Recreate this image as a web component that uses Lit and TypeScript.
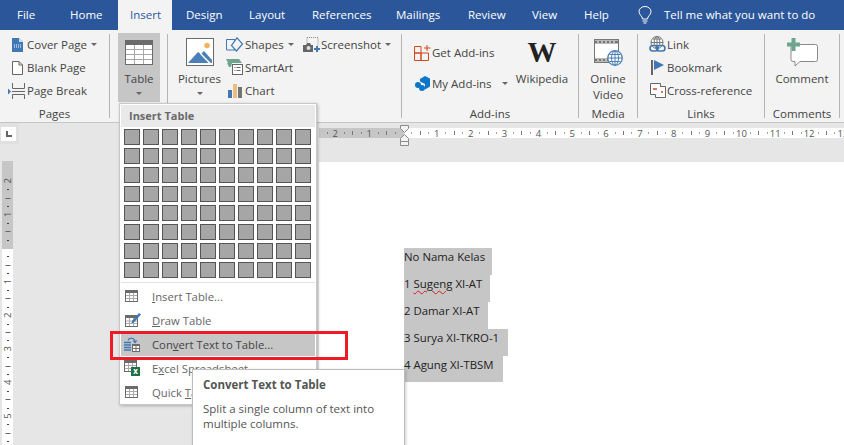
import { LitElement, css, html, svg } from "lit";
import { customElement } from "lit/decorators.js";

const tabs = [
  { label: "File", width: 57, pad: 17 },
  { label: "Home", width: 61, pad: 13 },
  { label: "Insert", width: 54, pad: 12, active: true },
  { label: "Design", width: 63, pad: 14 },
  { label: "Layout", width: 63, pad: 14 },
  { label: "References", width: 84, pad: 14 },
  { label: "Mailings", width: 72, pad: 14 },
  { label: "Review", width: 64, pad: 14 },
  { label: "View", width: 52, pad: 14 },
  { label: "Help", width: 54, pad: 14 },
];

const docLines = [
  { width: 88, text: html`No Nama Kelas` },
  { width: 86, text: html`1 <u>Sugeng</u> XI-AT` },
  { width: 84, text: html`2 Damar XI-AT` },
  { width: 104, text: html`3 Surya XI-TKRO-1` },
  { width: 99, text: html`4 Agung XI-TBSM` },
];

const I = {
  cover: html`<svg width="13" height="16" viewBox="0 0 13 16"><path d="M1 1h7l4 4v10H1z" fill="#3f78b5"/><path d="M8 1v4h4z" fill="#cfe0f0"/><path d="M3 8h7M3 10h7" stroke="#fff" stroke-width="1" stroke-dasharray="1 1"/></svg>`,
  blank: html`<svg width="13" height="16" viewBox="0 0 13 16"><path d="M1.500 1.500h6.500l3.500 3.500v9.500h-10z" fill="#fff" stroke="#666"/><path d="M8 1.500v3.500h3.500" fill="none" stroke="#666"/></svg>`,
  pageBreak: html`<svg width="19" height="16" viewBox="0 0 19 16"><path d="M4.500 0v5.500h12V0M4.500 16v-4.500h12V16" fill="none" stroke="#666"/><path d="M4 8.500h13" stroke="#666"/><path d="M0 5.500l3 3-3 3z" fill="#3f78b5"/></svg>`,
  table: html`<svg width="28" height="25" viewBox="0 0 28 25"><rect width="28" height="25" fill="#6b6b6b"/><rect x="1" y="5" width="26" height="19" fill="#fff"/><path d="M1 9.500h26M1 14.500h26M1 19.500h26M9.500 5v19M18.500 5v19" stroke="#a8a8a8"/></svg>`,
  pictures: html`<svg width="28" height="28" viewBox="0 0 28 28"><rect x=".5" y=".5" width="27" height="27" fill="#fff" stroke="#6b6b6b"/><circle cx="21" cy="7.500" r="2.800" fill="#efb55f"/><path d="M2 25l10-11 4 3 8 8z" fill="#4a7fb8"/><path d="M15 16l3-3 8 9v3h-1z" fill="#4a7fb8"/><path d="M14.500 15.500l9 9.500" stroke="#fff" stroke-width="1.300"/></svg>`,
  shapes: html`<svg width="19" height="16" viewBox="0 0 19 16"><path d="M.5 2.500h8.500v10.500h-8.500z" fill="none" stroke="#3f78b5"/><path d="M11 .8l5.500 6.200-6 7-5-5.500z" fill="#f3f3f3" stroke="#3f78b5" stroke-width="1.200"/></svg>`,
  smartArt: html`<svg width="19" height="17" viewBox="0 0 19 17"><path d="M0 0h13l3 4H6L5 8H3L1 4h1z" fill="#6fa58f"/><rect x="6.500" y="5.500" width="10" height="10" fill="#fff" stroke="#666"/><path d="M8.500 8.500h1M10.500 8.500h4M8.500 11.500h1M10.500 11.500h4" stroke="#666"/></svg>`,
  chart: html`<svg width="15" height="14" viewBox="0 0 15 14"><rect y="6" width="4" height="8" fill="#3f78b5"/><rect x="5" width="4" height="14" fill="#e8bf7e"/><rect x="10" y="3" width="4" height="11" fill="#737373"/></svg>`,
  screenshot: html`<svg width="18" height="16" viewBox="0 0 18 16"><path d="M4 .5h11v8" fill="none" stroke="#888" stroke-dasharray="1 1"/><path d="M4 .5v5" stroke="#888" stroke-dasharray="1 1"/><path d="M0 8h3l1-2h3l1 2h2v7H0z" fill="#666"/><circle cx="5.500" cy="11" r="2" fill="#ddd"/><path d="M14 9v6M11 12h6" stroke="#3f78b5" stroke-width="2"/></svg>`,
  getAddins: html`<svg width="17" height="16" viewBox="0 0 17 16"><path d="M.5 1.500h6.500v6.500h-6.500zM.5 8h6.500v7.500h-6.500zM7 8h7.500v7.500h-7.500zM13 0v6M10 3h6.500" fill="none" stroke="#d5471c"/></svg>`,
  myAddins: html`<svg width="15" height="15" viewBox="0 0 15 15"><path d="M5 3l5-3 5 2.500v8l-5 3v-5.500L5 5.500z" fill="#0b76c9"/><circle cx="3" cy="9" r="3" fill="#0b76c9"/><circle cx="7" cy="12" r="3" fill="#0b76c9"/></svg>`,
  video: html`<svg width="29" height="27" viewBox="0 0 29 27"><rect x=".5" y=".5" width="24" height="23" fill="#fff" stroke="#777"/><path d="M1 1.500h23v3H1zM1 19.500h23v3H1z" fill="#777"/><path d="M3 3h20M3 21h20" stroke="#fff" stroke-dasharray="2 2"/><circle cx="21" cy="19" r="7.300" fill="#fff" stroke="#4a7fb8" stroke-width="1.300"/><path d="M14 19h14M21 12v14M15.500 15.500h11M15.500 22.500h11" stroke="#4a7fb8"/><ellipse cx="21" cy="19" rx="3.500" ry="7" fill="none" stroke="#4a7fb8"/></svg>`,
  link: html`<svg width="17" height="17" viewBox="0 0 17 17"><circle cx="8" cy="6.500" r="6" fill="#fff" stroke="#777"/><path d="M2 6.500h12M4 3h8M8 .5v12" stroke="#777"/><ellipse cx="8" cy="6.500" rx="2.800" ry="6" fill="none" stroke="#777"/><rect x="1" y="9.500" width="8" height="5.500" rx="2.700" fill="none" stroke="#3f78b5" stroke-width="1.600"/><rect x="7.500" y="9.500" width="8.500" height="5.500" rx="2.700" fill="none" stroke="#3f78b5" stroke-width="1.600"/></svg>`,
  bookmark: html`<svg width="13" height="15" viewBox="0 0 13 15"><path d="M1 0v15" stroke="#666" stroke-width="2"/><path d="M3 0l10 5-10 5z" fill="#3f78b5"/></svg>`,
  crossRef: html`<svg width="16" height="15" viewBox="0 0 16 15"><path d="M.5.500h10v11h-10z" fill="#fff" stroke="#666"/><path d="M5.500 11.500v3h10V3.500h-5" fill="#fff" stroke="#666"/><path d="M3 6h4" stroke="#d5471c" stroke-width="1.500"/><path d="M11 9h2" stroke="#d5471c" stroke-width="1.500"/></svg>`,
  comment: html`<svg width="31" height="29" viewBox="0 0 31 29"><path d="M4 6.500h24.500a2 2 0 0 1 2 2v13a2 2 0 0 1-2 2H13l-5 4.500v-4.500H6a2 2 0 0 1-2-2z" fill="#fff" stroke="#8a8a8a"/><path d="M4.500 0h4v4.500H13v4H8.500V13h-4V8.500H0v-4h4.500z" fill="#6fa58f"/></svg>`,
  smallTable: html`<svg width="13" height="12" viewBox="0 0 13 12"><rect width="13" height="12" fill="#6b6b6b"/><rect x="1" y="3" width="11" height="8" fill="#fff"/><path d="M1 5.500h11M1 8.500h11M4.500 3v8M8.500 3v8" stroke="#aaa"/></svg>`,
  drawTable: html`<svg width="16" height="14" viewBox="0 0 16 14"><rect y="2" width="13" height="12" fill="#6b6b6b"/><rect x="1" y="5" width="11" height="8" fill="#fff"/><path d="M1 8h11M1 10.500h11M4.500 5v8M8.500 5v8" stroke="#aaa"/><path d="M7 8l7-8 2 1.500-7 8-2.500 1z" fill="#3f78b5"/></svg>`,
  convert: html`<svg class="conv" width="16" height="15" viewBox="0 0 16 15"><path d="M4 3.500c1-3 5-3.500 7 0" fill="none" stroke="#3f78b5" stroke-width="1.200"/><path d="M8.500 3.500h5l-2.500 3z" fill="#3f78b5"/><path d="M0 5.500h7M0 8h7M0 10.500h7M0 13h7" stroke="#3f78b5" stroke-width="1.300"/><rect x="8" y="7" width="8" height="8" fill="#6b6b6b"/><path d="M9 9h2.500v2H9zM12.500 9h2.500v2h-2.500zM9 12h2.500v2H9zM12.500 12h2.500v2h-2.500z" fill="#fff"/></svg>`,
};

const caret = html`<i class="caret"></i>`;

function row(icon: unknown, label: string, drop = false) {
  return html`<div class="row"><span class="ic">${icon}</span><span>${label}</span>${drop ? caret : ""}</div>`;
}

function big(icon: unknown, label: unknown, drop = false) {
  return html`<div class="big"><div class="big-ic">${icon}</div><div>${label}</div>${drop ? caret : ""}</div>`;
}

function hTicks() {
  const x0 = 84;
  const out = [];
  for (let i = -10; i <= 52; i++) {
    const x = x0 + i * 8.46;
    if (x < 0 || i === 0) continue;
    if (i % 4 === 0) {
      out.push(svg`<text x=${x} y="8.500" text-anchor="middle" class="rt">${Math.abs(i / 4)}</text>`);
    } else if (i % 2 === 0) {
      out.push(svg`<path d="M${Math.round(x) + 0.5} 3v4" stroke="#777"/>`);
    } else {
      out.push(svg`<path d="M${Math.round(x) + 0.5} 4.500v1" stroke="#444"/>`);
    }
  }
  return out;
}

function vTicks() {
  const y0 = 87;
  const out = [];
  for (let i = -8; i <= 24; i++) {
    const y = y0 + i * 8.4;
    if (y < 1 || i === 0) continue;
    if (i % 4 === 0) {
      out.push(svg`<text transform="translate(9 ${y}) rotate(-90)" text-anchor="middle" class="rt">${Math.abs(i / 4)}</text>`);
    } else if (i % 2 === 0) {
      out.push(svg`<path d="M3.500 ${Math.round(y) + 0.5}h5" stroke="#666"/>`);
    } else {
      out.push(svg`<path d="M5 ${Math.round(y) + 0.5}h2" stroke="#444"/>`);
    }
  }
  return out;
}

@customElement("app-root")
export class AppRoot extends LitElement {
  static styles = css`
    :host {
      display: block;
      position: relative;
      width: 100%;
      height: 445px;
      overflow: hidden;
      background: #e6e6e6;
      font-family: "Open Sans", "Noto Sans", sans-serif;
      font-size: 11.5px;
      color: #444;
    }

    .tabs {
      display: flex;
      height: 30px;
      background: #2b579a;
      color: #fff;
      line-height: 30px;
    }

    .tab {
      box-sizing: border-box;
      flex: none;
    }

    .tab.active {
      background: #f3f3f3;
      color: #2b579a;
    }

    .tell {
      display: flex;
      align-items: center;
      gap: 12px;
      margin-left: 14px;
    }

    .ribbon {
      display: flex;
      height: 92px;
      background: #f3f3f3;
      border-bottom: 1px solid #c6c6c6;
    }

    .sep {
      flex: none;
      width: 1px;
      margin: 4px 0;
      background: #b4b4b4;
    }

    .group {
      flex: none;
      display: flex;
      flex-direction: column;
    }

    .content {
      flex: 1;
      display: flex;
      padding-top: 3px;
      min-height: 0;
    }

    .name {
      height: 16px;
      line-height: 16px;
      text-align: center;
    }

    .pages { width: 109px; }
    .tbl { width: 57px; }
    .ill { width: 233px; }
    .adds { width: 176px; }
    .media { width: 58px; }
    .links { width: 126px; }
    .comments { width: 74px; }

    .pages .content { padding-left: 8px; }
    .tbl .content { padding-left: 8px; }
    .ill .content { padding-left: 9px; }
    .adds .content { padding-left: 11px; }
    .links .content { padding-left: 10px; }
    .media .content, .comments .content { justify-content: center; }

    .stack {
      flex: none;
      display: flex;
      flex-direction: column;
    }

    .shapes-stack { width: 76px; margin-left: 4px; }
    .add-stack { width: 103px; padding-top: 8px; gap: 8px; }

    .row {
      display: flex;
      align-items: center;
      height: 23px;
      white-space: nowrap;
    }

    .ic {
      flex: none;
      display: flex;
      align-items: center;
      justify-content: center;
      width: 19px;
    }

    .row .caret { margin: 0 0 0 4px; }
    .add-stack .row .caret { margin-left: 10px; }

    .caret {
      display: block;
      width: 0;
      height: 0;
      border: 3px solid transparent;
      border-top-color: #666;
      border-bottom: 0;
      margin-top: 5px;
    }

    .big {
      display: flex;
      flex-direction: column;
      align-items: center;
      line-height: 16px;
      text-align: center;
    }

    .big-ic {
      height: 38px;
      display: flex;
      align-items: center;
      justify-content: center;
    }

    .table-btn { flex: none; width: 42px; height: 69px; background: #c6c6c6; }
    .pic-btn { flex: none; width: 45px; }
    .wiki-btn { flex: none; width: 52px; }
    .video-btn { flex: none; width: 58px; }
    .comment-btn { flex: none; width: 74px; }

    .wiki-w {
      font-family: "Liberation Serif", serif;
      font-weight: 700;
      font-size: 29px;
      line-height: 24px;
      color: #222;
    }

    .work {
      display: grid;
      grid-template-columns: 19px 1fr;
      grid-template-rows: 39px 1fr;
      height: 322px;
    }

    .corner {
      background: #e0e0e0;
      height: 21px;
      padding: 4px 3px 0 1px;
      box-sizing: border-box;
    }

    .corner-box {
      height: 14px;
      background: #fff;
      display: flex;
      align-items: center;
      justify-content: center;
    }

    .corner-mark {
      width: 6px;
      height: 6px;
      border-left: 2px solid #666;
      border-bottom: 2px solid #666;
      box-sizing: border-box;
    }

    .hruler {
      position: relative;
      margin: 3px 0 0 300px;
      height: 14px;
    }

    .hruler svg, .vruler svg { display: block; }

    .rt {
      font-size: 9.500px;
      fill: #555;
      font-family: "Open Sans", sans-serif;
    }

    .marker {
      position: absolute;
      left: 81px;
      top: -1px;
    }

    .vruler {
      margin-top: -1px;
    }

    .canvas {
      padding-left: 300px;
      overflow: hidden;
    }

    .sheet {
      height: 100%;
      background: #fff;
      padding: 86px 0 0 85px;
      box-sizing: border-box;
      font-size: 11.400px;
      color: #222;
    }

    .line {
      box-sizing: border-box;
      height: 27px;
      line-height: 18px;
      background: #c6c6c6;
      white-space: nowrap;
    }

    .line:last-child { height: 26px; }

    .line u {
      text-decoration: underline wavy #d21f1f 1px;
      text-underline-offset: 2px;
    }

    .menu {
      position: absolute;
      left: 119px;
      top: 103px;
      box-sizing: border-box;
      width: 198px;
      height: 302px;
      padding: 1px;
      background: #fff;
      border: 1px solid #c8c8c8;
      box-shadow: 1px 1px 3px rgba(0, 0, 0, 0.25);
      color: #666;
      font-size: 11.300px;
    }

    .menu-head {
      height: 22px;
      line-height: 21px;
      padding-left: 8px;
      background: #e9e9e9;
      font-weight: 700;
      font-size: 11px;
      color: #6a6a6a;
    }

    .grid {
      display: grid;
      grid-template-columns: repeat(10, 16px);
      grid-auto-rows: 16px;
      gap: 3px;
      padding: 2px 3px 4px;
    }

    .cell {
      box-sizing: border-box;
      border: 1px solid #555;
      background: #a6a6a6;
    }

    .menu-sep {
      height: 1px;
      background: #e2e2e2;
      margin-bottom: 1px;
    }

    .item {
      display: flex;
      align-items: center;
      height: 24px;
      white-space: nowrap;
    }

    .item.hot {
      background: #c6c6c6;
      color: #444;
    }

    .item-ic {
      flex: none;
      width: 31px;
      padding-left: 4px;
      box-sizing: border-box;
      display: flex;
      align-items: center;
    }

    .conv { margin-left: -1px; }

    .excel {
      position: relative;
      display: block;
      width: 16px;
      height: 16px;
      margin-left: -1px;
    }

    .excel b {
      position: absolute;
      right: 0;
      bottom: 0;
      width: 9px;
      height: 9px;
      line-height: 8px;
      text-align: center;
      font-size: 8px;
      color: #fff;
      background: #1e7145;
    }

    .tip {
      position: absolute;
      left: 192px;
      top: 369px;
      box-sizing: border-box;
      width: 213px;
      height: 90px;
      padding: 7px 10px;
      background: #fff;
      border: 1px solid #bdbdbd;
      box-shadow: 1px 1px 3px rgba(0, 0, 0, 0.2);
      color: #555;
      line-height: 15px;
    }

    .tip-title {
      font-weight: 700;
      margin-bottom: 9px;
    }

    .redbox {
      position: absolute;
      left: 110px;
      top: 331px;
      width: 238px;
      height: 29px;
      box-sizing: border-box;
      border: 3px solid #ed1c24;
    }
  `;

  render() {
    return html`
      <div class="tabs">
        ${tabs.map(
          (t) => html`<div
            class="tab ${t.active ? "active" : ""}"
            style="width:${t.width}px;padding-left:${t.pad}px"
          >${t.label}</div>`
        )}
        <div class="tell">
          <svg width="14" height="18" viewBox="0 0 14 18" fill="none" stroke="#fff">
            <path d="M4.500 13c0-3-3.500-4-3.500-7.500a6 5 0 0 1 12 0c0 3.500-3.500 4.500-3.500 7.500z"/>
            <path d="M4.500 15h5M5.500 17h3"/>
          </svg>
          <span>Tell me what you want to do</span>
        </div>
      </div>

      <div class="ribbon">
        <div class="group pages">
          <div class="content">
            <div class="stack">
              ${row(I.cover, "Cover Page", true)} ${row(I.blank, "Blank Page")}
              ${row(I.pageBreak, "Page Break")}
            </div>
          </div>
          <div class="name">Pages</div>
        </div>
        <div class="sep"></div>
        <div class="group tbl">
          <div class="content">
            <div class="table-btn">${big(I.table, "Table", true)}</div>
          </div>
        </div>
        <div class="sep"></div>
        <div class="group ill">
          <div class="content">
            <div class="pic-btn">${big(I.pictures, "Pictures", true)}</div>
            <div class="stack shapes-stack">
              ${row(I.shapes, "Shapes", true)} ${row(I.smartArt, "SmartArt")}
              ${row(I.chart, "Chart")}
            </div>
            <div class="stack">${row(I.screenshot, "Screenshot", true)}</div>
          </div>
        </div>
        <div class="sep"></div>
        <div class="group adds">
          <div class="content">
            <div class="stack add-stack">
              ${row(I.getAddins, "Get Add-ins")}
              ${row(I.myAddins, "My Add-ins", true)}
            </div>
            <div class="wiki-btn">
              ${big(html`<span class="wiki-w">W</span>`, "Wikipedia")}
            </div>
          </div>
          <div class="name">Add-ins</div>
        </div>
        <div class="sep"></div>
        <div class="group media">
          <div class="content">
            <div class="video-btn">
              ${big(I.video, html`Online<br />Video`)}
            </div>
          </div>
          <div class="name">Media</div>
        </div>
        <div class="sep"></div>
        <div class="group links">
          <div class="content">
            <div class="stack">
              ${row(I.link, "Link")} ${row(I.bookmark, "Bookmark")}
              ${row(I.crossRef, "Cross-reference")}
            </div>
          </div>
          <div class="name">Links</div>
        </div>
        <div class="sep"></div>
        <div class="group comments">
          <div class="content">
            <div class="comment-btn">${big(I.comment, "Comment")}</div>
          </div>
          <div class="name">Comments</div>
        </div>
        <div class="sep"></div>
      </div>

      <div class="work">
        <div class="corner">
          <div class="corner-box"><div class="corner-mark"></div></div>
        </div>
        <div class="hruler">
          <svg width="525" height="14" viewBox="0 -2 525 14">
            <rect width="85" height="10" fill="#c6c6c6" />
            <rect x="85" width="440" height="10" fill="#fff" />
            ${hTicks()}
          </svg>
          <svg class="marker" width="9" height="21" viewBox="0 0 9 21">
            <path d="M.5.500h8v3l-4 4-4-4zM.5 13.500l4-4 4 4v3h-8zM.5 16.500h8v4h-8z" fill="#f3f3f3" stroke="#8a8a8a" />
          </svg>
        </div>
        <div class="vruler">
          <svg width="15" height="285" viewBox="-2 0 15 285">
            <rect width="11" height="88" fill="#c6c6c6" />
            <rect y="88" width="11" height="197" fill="#fff" />
            ${vTicks()}
          </svg>
        </div>
        <div class="canvas">
          <div class="sheet">
            ${docLines.map(
              (l) => html`<div class="line" style="width:${l.width}px">${l.text}</div>`
            )}
          </div>
        </div>
      </div>

      <div class="menu">
        <div class="menu-head">Insert Table</div>
        <div class="grid">
          ${Array.from({ length: 80 }, () => html`<div class="cell"></div>`)}
        </div>
        <div class="menu-sep"></div>
        <div class="item"><span class="item-ic">${I.smallTable}</span><span><u>I</u>nsert Table...</span></div>
        <div class="item"><span class="item-ic">${I.drawTable}</span><span><u>D</u>raw Table</span></div>
        <div class="item hot"><span class="item-ic">${I.convert}</span><span>Con<u>v</u>ert Text to Table...</span></div>
        <div class="item">
          <span class="item-ic"><span class="excel">${I.smallTable}<b>x</b></span></span>
          <span>E<u>x</u>cel Spreadsheet</span>
        </div>
        <div class="item"><span class="item-ic">${I.smallTable}</span><span>Quick <u>T</u>ables</span></div>
      </div>

      <div class="redbox"></div>

      <div class="tip">
        <div class="tip-title">Convert Text to Table</div>
        <div>Split a single column of text into<br />multiple columns.</div>
      </div>
    `;
  }
}
